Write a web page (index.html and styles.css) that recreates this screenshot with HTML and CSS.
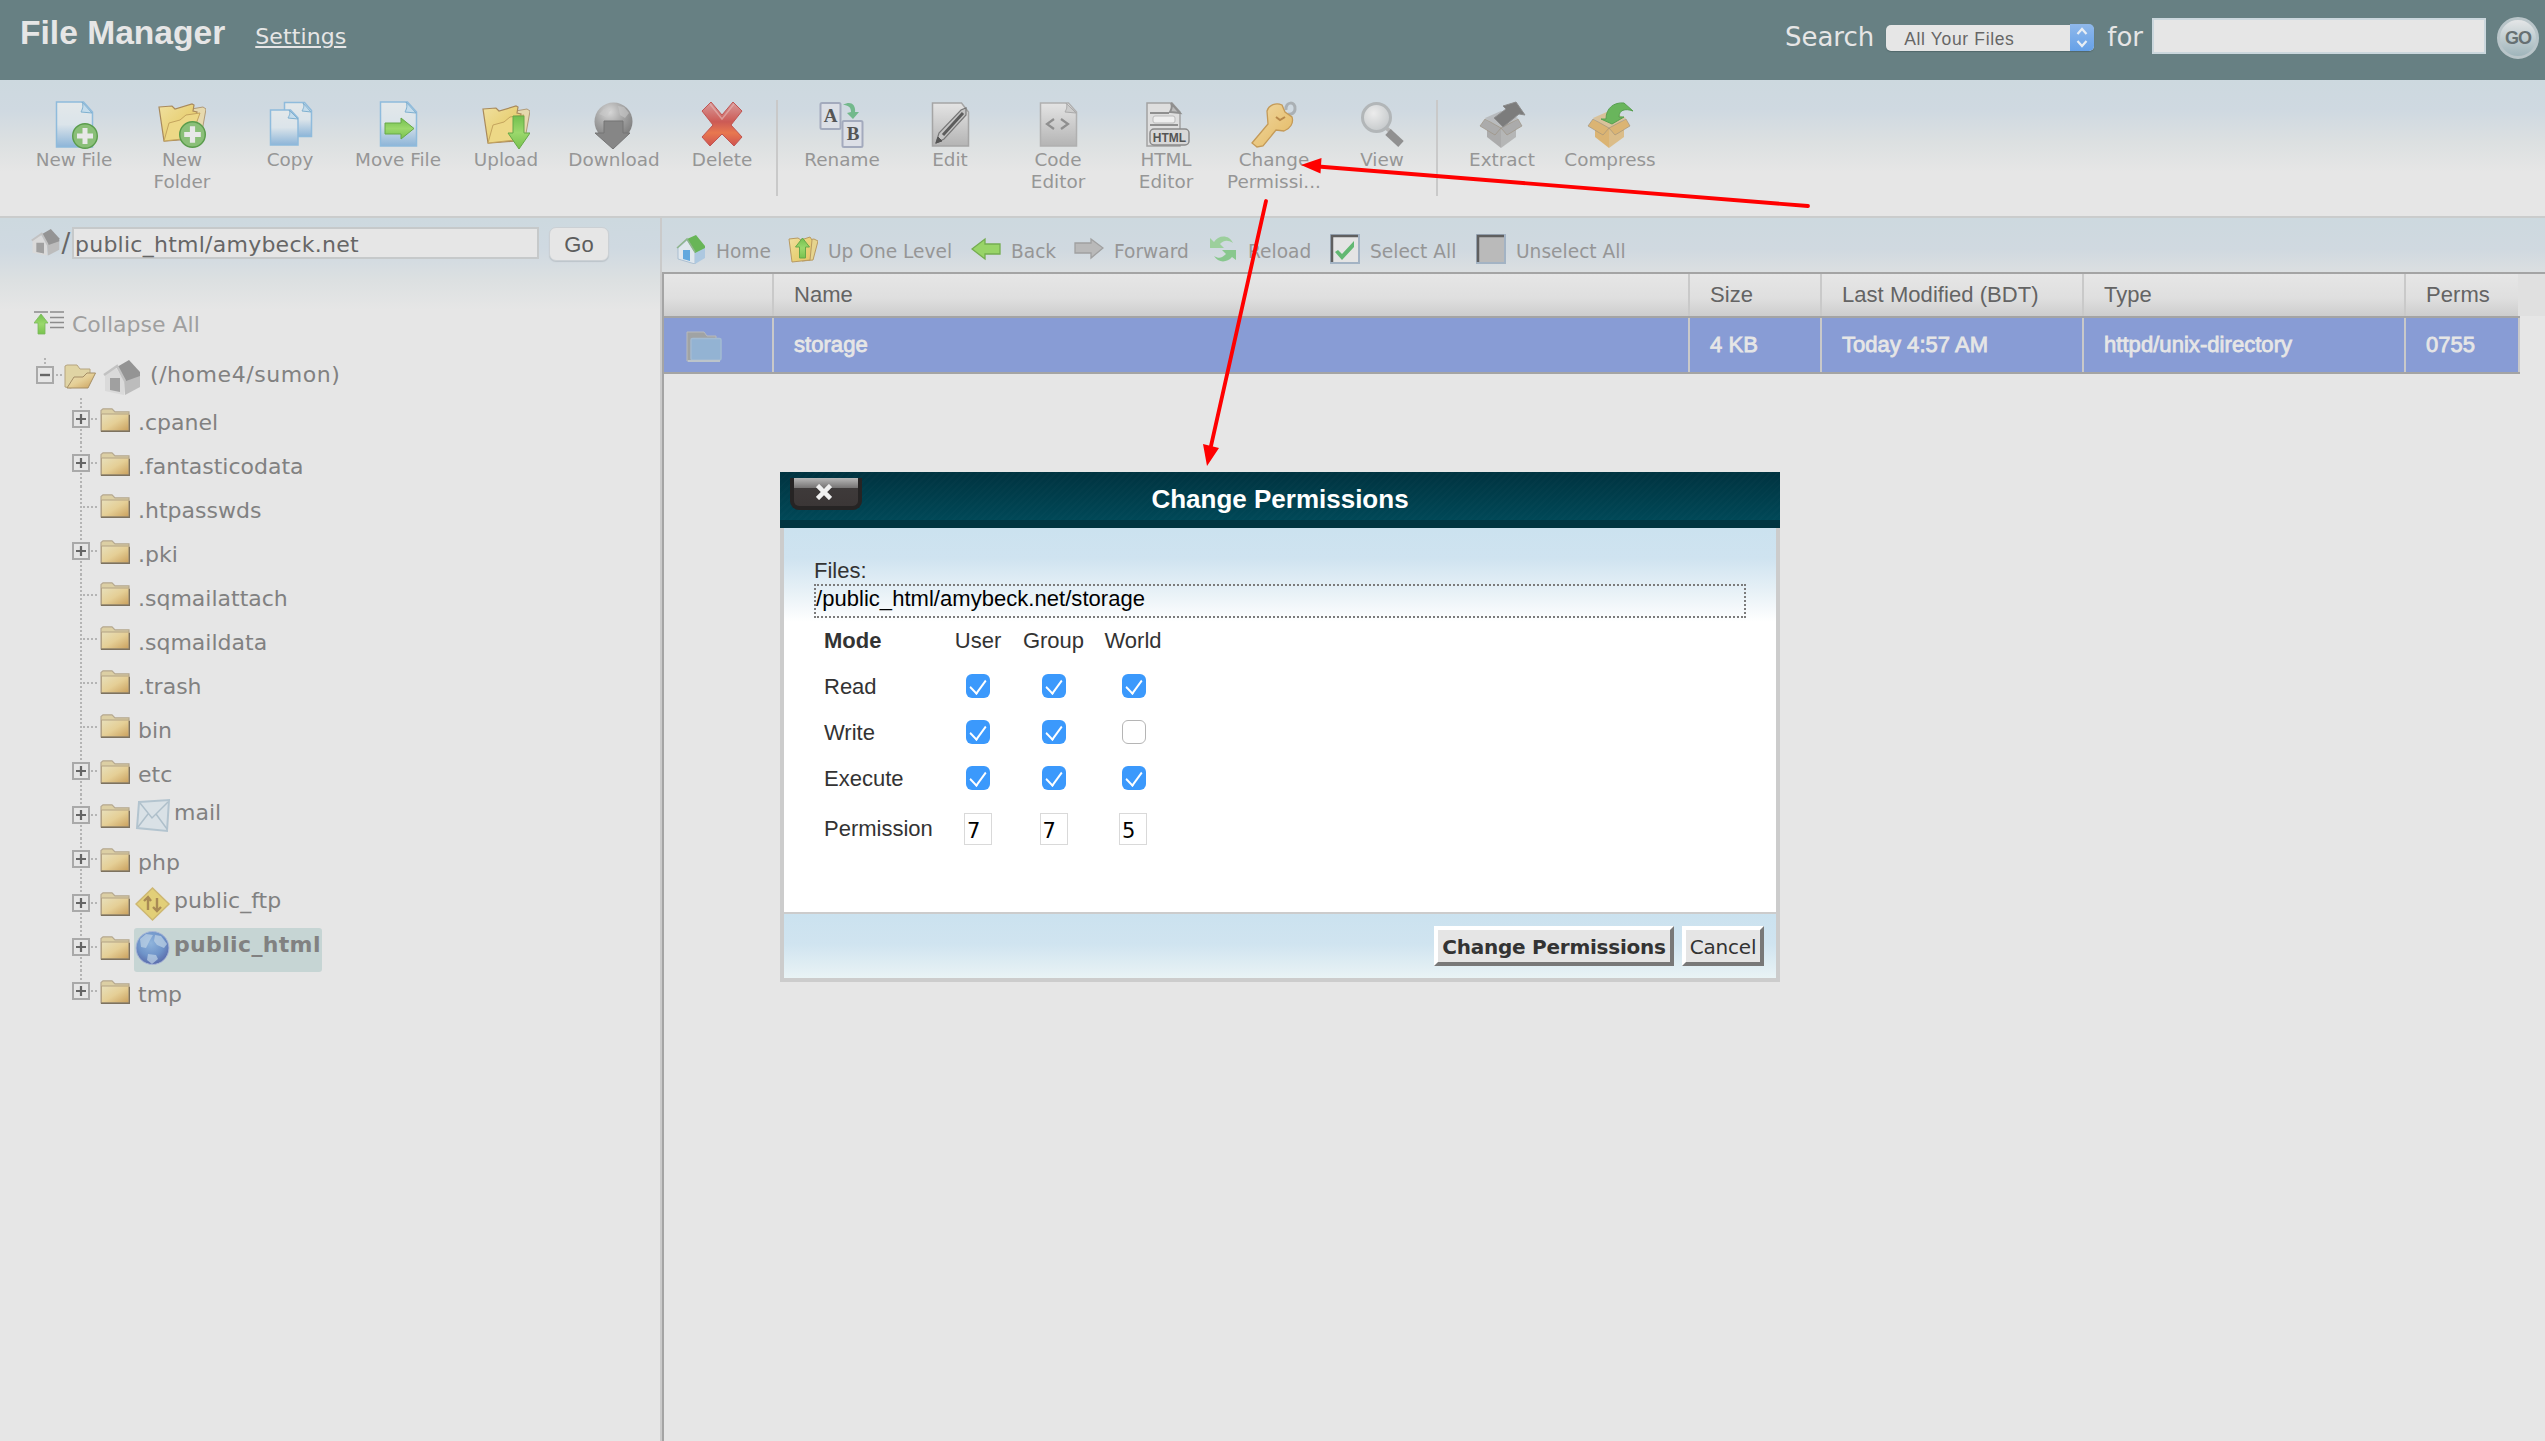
FILE: index.html
```html
<!DOCTYPE html>
<html lang="en">
<head>
<meta charset="utf-8">
<title>File Manager</title>
<link rel="stylesheet" href="styles.css">
</head>
<body>
<svg class="defs" width="0" height="0" aria-hidden="true">
  <defs>
    <linearGradient id="gPage" x1="0" y1="0" x2="0" y2="1"><stop offset="0" stop-color="#e3e8ea"/><stop offset=".5" stop-color="#dbe4ea"/><stop offset="1" stop-color="#8db5d8"/></linearGradient>
    <linearGradient id="gGreyPage" x1="0" y1="0" x2="0" y2="1"><stop offset="0" stop-color="#e4e4e4"/><stop offset="1" stop-color="#b4b4b4"/></linearGradient>
    <linearGradient id="gFolder" x1="0" y1="0" x2="1" y2="1"><stop offset="0" stop-color="#e8e0bb"/><stop offset=".5" stop-color="#e5cf96"/><stop offset="1" stop-color="#c99f5c"/></linearGradient>
    <linearGradient id="gYellow" x1="0" y1="0" x2="1" y2="1"><stop offset="0" stop-color="#f0e0a0"/><stop offset=".5" stop-color="#e9d27a"/><stop offset="1" stop-color="#e6c566"/></linearGradient>
    <linearGradient id="gGreen" x1="0" y1="0" x2="0" y2="1"><stop offset="0" stop-color="#72c04e"/><stop offset=".5" stop-color="#9bd86c"/><stop offset="1" stop-color="#78c24e"/></linearGradient>
    <linearGradient id="gRed" x1="0" y1="0" x2="0" y2="1"><stop offset="0" stop-color="#d99a9a"/><stop offset=".45" stop-color="#cc5a55"/><stop offset=".7" stop-color="#e8784f"/><stop offset="1" stop-color="#cf5350"/></linearGradient>
    <linearGradient id="gKey" x1="0" y1="0" x2="1" y2="1"><stop offset="0" stop-color="#f0d9a4"/><stop offset="1" stop-color="#e4b860"/></linearGradient>
    <radialGradient id="gBall" cx=".4" cy=".25" r=".8"><stop offset="0" stop-color="#d8d8d8"/><stop offset=".5" stop-color="#a2a2a2"/><stop offset="1" stop-color="#777"/></radialGradient>
    <radialGradient id="gGlobe" cx=".45" cy=".35" r=".65"><stop offset="0" stop-color="#8fb4dc"/><stop offset=".6" stop-color="#6f94c9"/><stop offset="1" stop-color="#5a6cab"/></radialGradient>
    <radialGradient id="gLens" cx=".4" cy=".35" r=".7"><stop offset="0" stop-color="#ececec"/><stop offset="1" stop-color="#c4c8ca"/></radialGradient>
    <symbol id="folder" viewBox="0 0 30 24">
      <path d="M1 23V2.500L3 .8h9l3 3h14V23z" fill="#dccfa4" stroke="#b5a890" stroke-width="1.200"/>
      <path d="M1.500 6H29v17H1.500z" fill="url(#gFolder)" stroke="#b3a284"/>
      <path d="M1 23.200h28.500V7" fill="none" stroke="#7d725f" stroke-width="1.500"/>
    </symbol>
    <symbol id="plus" viewBox="0 0 28 44">
      <path d="M9 0v11M9 31v13M19 21h8" stroke="#b4b4b4" stroke-width="2" stroke-dasharray="2 2" fill="none"/>
      <rect x="1" y="13" width="16" height="16" fill="#e6e6e6" stroke="#a9a9a9" stroke-width="2"/>
      <path d="M4 21h10M9 16v10" stroke="#666" stroke-width="2.200"/>
    </symbol>
    <symbol id="lastplus" viewBox="0 0 28 44">
      <path d="M9 0v11M19 21h8" stroke="#b4b4b4" stroke-width="2" stroke-dasharray="2 2" fill="none"/>
      <rect x="1" y="13" width="16" height="16" fill="#e6e6e6" stroke="#a9a9a9" stroke-width="2"/>
      <path d="M4 21h10M9 16v10" stroke="#666" stroke-width="2.200"/>
    </symbol>
    <symbol id="leaf" viewBox="0 0 28 44">
      <path d="M9 0v44M11 21h16" stroke="#b4b4b4" stroke-width="2" stroke-dasharray="2 2" fill="none"/>
    </symbol>
    <symbol id="bigfolder" viewBox="0 0 48 48">
      <path d="M22 10l23-4 3 2-5 28-28 3z" fill="#e6d9ae" stroke="#b09a78"/>
      <path d="M1 6l13-1 3 3 17-5 2 1-1 6 4 1-5 27L6 40z" fill="url(#gYellow)" stroke="#a98a5c" stroke-width="1.200"/>
      <path d="M6 40l5-18 11-3 6-5 14-2-9 25z" fill="#edd886" stroke="#c4a45e" stroke-width="1"/>
    </symbol>
    <symbol id="addbadge" viewBox="0 0 26 26">
      <circle cx="13" cy="13" r="12.300" fill="#8abf78" stroke="#5a9c4c" stroke-width="1.400"/>
      <path d="M13 5v16M5 13h16" stroke="#e8e8e8" stroke-width="5"/>
    </symbol>
    <symbol id="house" viewBox="0 0 38 36">
      <path d="M2 16v16l19 4V22L13 9z" fill="#dadada"/>
      <path d="M21 20l16-5v13L22 36z" fill="#bcbcbc"/>
      <path d="M14 8L26 1l11 12v4l-14 5z" fill="#949494"/>
      <path d="M1 16L14 7l8 15" fill="none" stroke="#c2c2c2" stroke-width="2.500"/>
      <path d="M7 19h10v14l-10-2z" fill="#a0a0a0"/>
    </symbol>
    <symbol id="openbox" viewBox="0 0 48 48">
      <path d="M9 26l14 1v20L9 36z"/><path d="M38 24l-15 3v20l15-11z" fill-opacity=".8"/>
      <path d="M7 17l16-7 17 7-17 12z" fill-opacity=".65"/>
      <path d="M7 18l16 9-6 7L2 25z" stroke="#9a8f7c" stroke-width=".6"/>
      <path d="M40 18l-17 9 6 7 15-9z" stroke="#9a8f7c" stroke-width=".6"/>
    </symbol>
  </defs>
</svg>

<header class="topbar">
  <h1 class="title">File Manager</h1>
  <a class="settings">Settings</a>
  <div class="search">
    <span>Search</span>
    <span class="select"><span class="select-text">All Your Files</span>
      <svg class="stepper" viewBox="0 0 24 27"><path d="M7.500 10l4.500-5 4.500 5M7.500 17l4.500 5 4.500-5" fill="none" stroke="#e8eef4" stroke-width="2.200"/></svg>
    </span>
    <span class="for">for</span>
    <span class="query"></span>
    <span class="gobadge">GO</span>
  </div>
</header>

<nav class="toolbar">
  <div class="tool"><svg viewBox="0 0 48 48"><path d="M6.500 1h27l9 10v35h-36z" fill="url(#gPage)" stroke="#8fbbdc" stroke-width="1.500"/><path d="M32 1c2 4 0 8-1 10l11 1z" fill="#c4dcec" stroke="#7fb0d0"/><use href="#addbadge" x="22" y="22" width="26" height="26"/></svg><span>New File</span></div>
  <div class="tool"><svg viewBox="0 0 48 48"><use href="#bigfolder" width="48" height="48"/><use href="#addbadge" x="21" y="20" width="27" height="27"/></svg><span>New<br>Folder</span></div>
  <div class="tool"><svg viewBox="0 0 48 48"><path d="M18.500 1.500h20l7 8v26h-27z" fill="url(#gPage)" stroke="#8fbbdc" stroke-width="1.500"/><path d="M37 2c2 3 0 6-1 8l9 1z" fill="#c4dcec" stroke="#7fb0d0"/><path d="M4.500 9h20l7.500 8v27H4.500z" fill="url(#gPage)" stroke="#8fbbdc" stroke-width="1.500"/><path d="M23 9c2 3 0 6-1 8l10 1z" fill="#c4dcec" stroke="#7fb0d0"/></svg><span>Copy</span></div>
  <div class="tool"><svg viewBox="0 0 48 48"><path d="M6.500 1h27l9 10v34h-36z" fill="url(#gPage)" stroke="#8fbbdc" stroke-width="1.500"/><path d="M32 1c2 4 0 8-1 10l11 1z" fill="#c4dcec" stroke="#7fb0d0"/><path d="M11 22h16v-5l13 10.500L27 38v-5H11z" fill="url(#gGreen)" stroke="#66a848"/></svg><span>Move File</span></div>
  <div class="tool"><svg viewBox="0 0 48 48"><g transform="translate(0 2)"><use href="#bigfolder" width="48" height="48"/></g><path d="M31 15h11v17h6L37 48 26 32h5z" fill="url(#gGreen)" stroke="#66a848"/></svg><span>Upload</span></div>
  <div class="tool"><svg viewBox="0 0 48 48"><circle cx="23.500" cy="20.500" r="19" fill="url(#gBall)"/><path d="M28 5l6 1 5 6-4 5-5-3zM9 13l5-5 7 1-5 7z" fill="#c8c8c8" opacity=".6"/><path d="M14 20h19v12h7L23 48 5 32h9z" fill="#868686" stroke="#757575"/></svg><span>Download</span></div>
  <div class="tool"><svg viewBox="0 0 48 48"><path d="M4 10l9-9 11 13L35 1l9 9-11 14 11 12-8 9-12-12-12 12-8-9 11-12z" fill="url(#gRed)" stroke="#c05552"/><path d="M12 3l12 15L36 3" fill="none" stroke="#e3b0ae" stroke-width="1.500" opacity=".7"/></svg><span>Delete</span></div>
  <i class="divider"></i>
  <div class="tool"><svg viewBox="0 0 48 48"><rect x="2.500" y="2" width="20" height="26" rx="1.500" fill="#dcdfe6" stroke="#a3aabd" stroke-width="2"/><rect x="24.500" y="20" width="20" height="26" rx="1.500" fill="#dcdfe6" stroke="#a3aabd" stroke-width="2"/><text x="12.500" y="21" class="glyph serif">A</text><text x="35" y="39" class="glyph serif">B</text><path d="M25 4c8-5 13 0 12 7h4l-6 7-6-6 4-1c0-5-3-7-8-7z" fill="#73b98c"/></svg><span>Rename</span></div>
  <div class="tool"><svg viewBox="0 0 48 48"><path d="M6.500 2h29l7 9v34h-36z" fill="url(#gGreyPage)" stroke="#a5a5a5" stroke-width="1.500"/><path d="M10 42l3-10L35 9l5-2v7L18 38z" fill="#c4c4c4" stroke="#777" stroke-width="1.200"/><path d="M17 34L37 12" stroke="#5c5c5c" stroke-width="3"/><path d="M10 42l2-6 4 4z" fill="#555" stroke="#555"/></svg><span>Edit</span></div>
  <div class="tool"><svg viewBox="0 0 48 48"><path d="M6.500 2h28l8 9v34h-36z" fill="url(#gGreyPage)" stroke="#b0b0b0" stroke-width="1.500"/><path d="M32 2c2 4 0 7-1 9l11 1z" fill="#ccc" stroke="#aaa"/><path d="M20 18l-7 5 7 5M27 18l7 5-7 5" fill="none" stroke="#8f8f8f" stroke-width="2.200"/></svg><span>Code<br>Editor</span></div>
  <div class="tool"><svg viewBox="0 0 48 48"><path d="M5 2h25l8 9v34H5z" fill="#dedede" stroke="#a3a3a3" stroke-width="1.500"/><path d="M29 2c2 4 0 7-1 9l10 1zM8 12h19M8 24h28" fill="#bbb" stroke="#8f8f8f" stroke-width="2"/><rect x="11" y="15" width="22" height="7" rx="2" fill="#eee" stroke="#bbb"/><rect x="8" y="28" width="39" height="16" rx="4" fill="#d8d8d8" stroke="#8a8a8a" stroke-width="1.500"/><text x="27.500" y="40.500" class="glyph tag">HTML</text></svg><span>HTML<br>Editor</span></div>
  <div class="tool"><svg viewBox="0 0 48 48"><path d="M36 9c-1-9 10-9 9-1 0 4-4 6-7 5" fill="none" stroke="#aab0b4" stroke-width="3"/><path d="M17 10c2-6 9-9 15-6l3 7 7 5c2 6-2 12-8 14l-8-1-13 16-6 1-5-4 16-19z" fill="url(#gKey)" stroke="#c49a58" stroke-width="1.300"/><path d="M26 16l4 3 5-3" fill="none" stroke="#b8884a" stroke-width="2"/></svg><span>Change<br>Permissi...</span></div>
  <div class="tool"><svg viewBox="0 0 48 48"><path d="M27 26l6 5" stroke="#b5b5b5" stroke-width="4"/><path d="M30 31l13 12" stroke="#909090" stroke-width="8"/><circle cx="18.500" cy="16.500" r="14" fill="url(#gLens)" stroke="#b2b6b8" stroke-width="3"/></svg><span>View</span></div>
  <i class="divider"></i>
  <div class="tool"><svg viewBox="0 0 48 48"><use href="#openbox" width="48" height="48" fill="#ababab"/><path d="M16 17l12-9-3-3 13-4 9 13-6-1-16 13z" fill="#7c7c7c" stroke="#8d8d8d"/></svg><span>Extract</span></div>
  <div class="tool"><svg viewBox="0 0 48 48"><use href="#openbox" width="48" height="48" fill="#dbb473"/><path d="M15 18h5C20 7 28 1 38 2l9 8c-8-3-14-1-14 6h5L26 23z" fill="#69b55c" stroke="#58a050"/></svg><span>Compress</span></div>
</nav>

<main class="panes">
  <aside class="side">
    <div class="path">
      <svg class="path-home" viewBox="0 0 38 36"><use href="#house"/></svg><span class="slash">/</span>
      <span class="path-input">public_html/amybeck.net</span>
      <span class="path-go">Go</span>
    </div>
    <div class="collapse"><svg viewBox="0 0 30 24"><path d="M0 1h14M16 1h14M16 6.500h14M16 11.500h14M16 16.500h14" stroke="#8c8c8c" stroke-width="1.600"/><path d="M7 3l7 9h-3v11H4V12H0z" fill="url(#gGreen)" stroke="#78b85c" stroke-width=".8"/></svg><span>Collapse All</span></div>
    <div class="root">
      <svg class="root-toggle" viewBox="0 0 28 28"><path d="M9 0v7M20 17h8" stroke="#b4b4b4" stroke-width="2" stroke-dasharray="2 2"/><rect x="1" y="9" width="16" height="16" fill="none" stroke="#a9a9a9" stroke-width="2"/><path d="M4 17h10" stroke="#666" stroke-width="2.400"/></svg>
      <svg class="root-folder" viewBox="0 0 32 25"><path d="M1 23V2l2-1h10l3 4h10v6L7 24z" fill="#e0d4a4" stroke="#b5a480"/><path d="M3 24L10 13h9l4-4h8.500L24 24z" fill="url(#gFolder)" stroke="#a58e66"/></svg>
      <svg class="root-home" viewBox="0 0 38 36"><use href="#house"/></svg>
      <span>(/home4/sumon)</span>
    </div>
    <ul class="tree">
      <li><svg class="tg"><use href="#plus"/></svg><svg class="fd"><use href="#folder"/></svg><span class="lb">.cpanel</span></li>
      <li><svg class="tg"><use href="#plus"/></svg><svg class="fd"><use href="#folder"/></svg><span class="lb">.fantasticodata</span></li>
      <li class="leaf"><svg class="tg"><use href="#leaf"/></svg><svg class="fd"><use href="#folder"/></svg><span class="lb">.htpasswds</span></li>
      <li><svg class="tg"><use href="#plus"/></svg><svg class="fd"><use href="#folder"/></svg><span class="lb">.pki</span></li>
      <li class="leaf"><svg class="tg"><use href="#leaf"/></svg><svg class="fd"><use href="#folder"/></svg><span class="lb">.sqmailattach</span></li>
      <li class="leaf"><svg class="tg"><use href="#leaf"/></svg><svg class="fd"><use href="#folder"/></svg><span class="lb">.sqmaildata</span></li>
      <li class="leaf"><svg class="tg"><use href="#leaf"/></svg><svg class="fd"><use href="#folder"/></svg><span class="lb">.trash</span></li>
      <li class="leaf"><svg class="tg"><use href="#leaf"/></svg><svg class="fd"><use href="#folder"/></svg><span class="lb">bin</span></li>
      <li><svg class="tg"><use href="#plus"/></svg><svg class="fd"><use href="#folder"/></svg><span class="lb">etc</span></li>
      <li><svg class="tg"><use href="#plus"/></svg><svg class="fd"><use href="#folder"/></svg><span class="special"><svg viewBox="0 0 36 36"><path d="M4 4l30-2-2 31-30-3z" fill="#d9e1e6" stroke="#b3c4cf" stroke-width="2"/><path d="M5 5l12 15L33 4M3 29l10-13M32 31L21 16" fill="none" stroke="#aebfca" stroke-width="1.500"/></svg>mail</span></li>
      <li><svg class="tg"><use href="#plus"/></svg><svg class="fd"><use href="#folder"/></svg><span class="lb">php</span></li>
      <li><svg class="tg"><use href="#plus"/></svg><svg class="fd"><use href="#folder"/></svg><span class="special"><svg viewBox="0 0 36 36"><path d="M17.500 2L34 18 17.500 34 1 18z" fill="#e2cf78" stroke="#cdb772" stroke-width="1.500"/><path d="M13 24V12M9 15l4-4 3 4M22 12v12M18 21l4 4 4-4" fill="none" stroke="#a98a55" stroke-width="2.400"/></svg>public_ftp</span></li>
      <li><svg class="tg"><use href="#plus"/></svg><svg class="fd"><use href="#folder"/></svg><span class="special selected"><svg viewBox="0 0 36 36"><circle cx="17.500" cy="18" r="16.500" fill="url(#gGlobe)" stroke="#aab8d8"/><path d="M5 9l6-5 7 1-3 5-4 8-5-1zM20 5l6 1 6 8-3 4-7-3-3-4zM13 24l8 1 2 4-6 5-5-4z" fill="#bfd3e6" opacity=".7"/></svg>public_html</span></li>
      <li><svg class="tg"><use href="#lastplus"/></svg><svg class="fd"><use href="#folder"/></svg><span class="lb">tmp</span></li>
    </ul>
  </aside>

  <section class="files">
    <div class="actions">
      <span class="act"><svg viewBox="0 0 30 30"><path d="M2 14L11 6l8 12v12L2 25z" fill="#e0e7ed" stroke="#9fb6cc" stroke-width=".8"/><path d="M19 17l10-4v11l-10 6z" fill="#adc8e0"/><path d="M11 5L20 1l9 11v2l-10 5z" fill="#68b557"/><path d="M1 14l10-9 8 13" fill="none" stroke="#8fb58c" stroke-width="1.500"/><path d="M7 16h7v11l-7-2z" fill="#62a8de"/></svg>Home</span>
      <span class="act"><svg viewBox="0 0 30 30"><path d="M14 7l12-2 4 2-5 19-11 1z" fill="#e6d48e" stroke="#b89a62"/><path d="M1 5l9-1 3 2 9-3 2 3-2 20-18 2z" fill="url(#gYellow)" stroke="#b89a62"/><path d="M14.500 4l7 9h-4v11h-6V13h-4z" fill="url(#gGreen)" stroke="#66a848"/></svg>Up One Level</span>
      <span class="act"><svg viewBox="0 0 30 30"><path d="M1 15L14 5v5h15v10H14v5z" fill="#98d468" stroke="#74ad50" stroke-width="1.300"/></svg>Back</span>
      <span class="act"><svg viewBox="0 0 30 30"><path d="M29 14L17 5v4H1v10h16v5z" fill="#b9b9b9" stroke="#a0a0a0" stroke-width="1.300"/></svg>Forward</span>
      <span class="act"><svg viewBox="0 0 30 30"><path d="M2 4l4 4c4-7 15-8 19 1-5-3-9-3-13 1l4 4H2z" fill="#9ccf9c"/><path d="M28 26l-4-3c-5 6-14 6-18-1 5 3 8 2 12-2l-4-4h14z" fill="#88c78e"/></svg>Reload</span>
      <span class="act"><svg viewBox="0 0 30 30"><rect width="30" height="30" fill="#a3b3c4"/><path d="M2 2h26v26H2z" fill="#e4e4e4"/><path d="M2 28V2h26" fill="none" stroke="#5f5f5f" stroke-width="2.500"/><path d="M5 18l3-2 4 4L24 7v6L12 26z" fill="#62b872"/></svg>Select All</span>
      <span class="act"><svg viewBox="0 0 30 30"><rect width="30" height="30" fill="#a3b3c4"/><path d="M2 2h26v26H2z" fill="#bababa"/><path d="M2 28V2h26" fill="none" stroke="#5f5f5f" stroke-width="2.500"/></svg>Unselect All</span>
    </div>
    <div class="grid">
      <div class="row head"><span></span><span>Name</span><span>Size</span><span>Last Modified (BDT)</span><span>Type</span><span>Perms</span></div>
      <div class="row entry"><span><svg viewBox="0 0 36 32"><path d="M1 31V2h17l3 4h9v4H6v21z" fill="#a0a3a4" stroke="#b8babb"/><rect x="5" y="8.500" width="30" height="21.500" rx="1.500" fill="#93b3d3" stroke="#a3bbd2" stroke-width="1.500"/><path d="M2 31h32" stroke="#bcc4ca" stroke-width="2"/></svg></span><span>storage</span><span>4 KB</span><span>Today 4:57 AM</span><span>httpd/unix-directory</span><span>0755</span></div>
    </div>
  </section>
</main>

<div class="dialog" role="dialog">
  <div class="dialog-head"><span class="close"><svg viewBox="0 0 16 16"><path d="M1.500 1.500l13 13M14.500 1.500l-13 13" stroke="#f0f0f0" stroke-width="4.500"/></svg></span><h2>Change Permissions</h2></div>
  <div class="dialog-body">
    <div class="files-label">Files:</div>
    <div class="files-list">/public_html/amybeck.net/storage</div>
    <div class="modes">
      <b>Mode</b><span class="c">User</span><span class="c">Group</span><span class="c">World</span>
      <span class="mode">Read</span><i class="cb on"></i><i class="cb on"></i><i class="cb on"></i>
      <span class="mode">Write</span><i class="cb on"></i><i class="cb on"></i><i class="cb"></i>
      <span class="mode">Execute</span><i class="cb on"></i><i class="cb on"></i><i class="cb on"></i>
      <span>Permission</span><span class="num">7</span><span class="num">7</span><span class="num">5</span>
    </div>
  </div>
  <div class="dialog-foot"><span class="btn primary">Change Permissions</span><span class="btn cancel">Cancel</span></div>
</div>

<svg class="arrows" viewBox="0 0 2545 1441">
  <path d="M1808 206L1318 166.500M1266 201L1211 446" stroke="#f00" stroke-width="3.800" stroke-linecap="round"/>
  <path d="M1301 165l20.500-7-1 15.500zM1207 466l-4-22 16 4z" fill="#f00"/>
</svg>
</body>
</html>
```
FILE: styles.css
```css
* { box-sizing: border-box; }
html, body { margin: 0; height: 100%; overflow: hidden; }
body {
  display: flex;
  flex-direction: column;
  background: #e6e6e6;
  font-family: "DejaVu Sans", Verdana, sans-serif;
  font-size: 22px;
  color: #818181;
}
svg { display: block; flex: none; }
.defs { position: absolute; }

/* Top bar */
.topbar {
  display: flex;
  align-items: flex-start;
  height: 80px;
  flex: none;
  padding: 0 6px 0 20px;
  background: #678083;
  color: #e6e6e6;
}
.title { margin: 0; font: bold 33.6px/66px "Liberation Sans", Arial, sans-serif; }
.settings { margin-left: 30px; letter-spacing: .1px; line-height: 73px; text-decoration: underline; text-decoration-thickness: 2px; text-underline-offset: 2px; }
.search { display: flex; align-items: flex-start; margin-left: auto; font-size: 26px; line-height: 74px; }
.select {
  display: flex;
  justify-content: space-between;
  width: 208px;
  height: 26px;
  margin: 25px 0 0 12px;
  padding-left: 18px;
  border-radius: 5px;
  background: #e6e6e6;
  box-shadow: 0 1px 1px #51686b;
  color: #666;
  font: 17.5px/29px "Liberation Sans", Arial, sans-serif;
  letter-spacing: .65px;
}
.stepper { width: 24px; height: 27px; margin-top: -1px; border-radius: 0 5px 5px 0; background: linear-gradient(#8fb8ea, #66a1e8); }
.for { margin-left: 13px; }
.query { width: 334px; height: 36px; margin: 18px 0 0 9px; border: 2px solid #cbd7dd; background: #e6e6e6; }
.gobadge {
  width: 42px;
  height: 42px;
  margin: 17px 0 0 11px;
  border: 3px solid #b9c5c9;
  border-radius: 50%;
  background: linear-gradient(#e4e6e7, #9fb5bb);
  color: #667072;
  font: bold 18px/37px "Liberation Sans", Arial, sans-serif;
  letter-spacing: -1px;
  text-align: center;
}

/* Toolbar */
.toolbar {
  display: flex;
  height: 138px;
  flex: none;
  padding: 21px 0 0 20px;
  border-bottom: 2px solid #cacccc;
  background: linear-gradient(#cdd9df, #cfd9e1 30px, #dce0e1 62px, #e6e6e6 92px);
}
.tool { display: flex; flex-direction: column; align-items: center; width: 108px; color: #969696; font-size: 18.4px; line-height: 22px; text-align: center; white-space: nowrap; }
.tool svg { width: 48px; height: 48px; }
.divider { width: 2px; height: 96px; margin: -1px 10px 0 0; background: #c9c9c9; }
.glyph { fill: #555; text-anchor: middle; }
.serif { font: bold 19px "Liberation Serif", serif; }
.tag { font: bold 12px "Liberation Sans", sans-serif; }

/* Panes */
.panes { display: flex; flex: 1; min-height: 0; }
.side { width: 662px; flex: none; border-right: 2px solid #cacaca; background: linear-gradient(#cdd9df, #cfd9e1 30px, #dce0e1 62px, #e6e6e6 92px); }
.path { display: flex; height: 43px; padding: 9px 0 0 31px; line-height: 34px; color: #666; }
.path-home { width: 29px; height: 28px; margin-top: 1px; }
.slash { width: 12px; text-align: center; font-size: 26px; line-height: 32px; }
.path-input { width: 467px; height: 32px; padding-left: 1px; border: 2px solid #c6c9ca; background: #e6e6e6; letter-spacing: .25px; line-height: 31px; }
.path-go { width: 60px; height: 34px; margin-left: 10px; border: 1px solid #cbd0d4; border-radius: 7px; background: #e6e6e6; box-shadow: 0 1px 1px #bcc4ca; color: #5d5d5d; font: 22px/34px "Liberation Sans", Arial, sans-serif; text-align: center; }
.collapse { display: flex; height: 30px; margin-top: 48px; padding-left: 34px; color: #9f9f9f; line-height: 32px; }
.collapse svg { width: 30px; height: 24px; margin: 2px 8px 0 0; }
.root { display: flex; margin-top: 19px; height: 40px; padding-left: 36px; letter-spacing: .55px; line-height: 34px; }
.root-toggle { width: 28px; height: 28px; }
.root-folder { width: 32px; height: 25px; margin-top: 6px; }
.root-home { width: 38px; height: 36px; margin: 1px 9px 0 7px; }
.tree { margin: 0; padding: 0 0 0 72px; list-style: none; }
.tree li { display: flex; height: 44px; }
.tg { width: 28px; height: 44px; }
.fd { width: 30px; height: 24px; margin-top: 10px; }
.leaf .fd { margin-top: 8px; }
.lb { margin: 2px 0 0 8px; line-height: 45px; }
.special { display: flex; height: 44px; margin: 2px 0 0 4px; padding-right: 1px; border-radius: 3px; line-height: 34px; }
.special svg { width: 36px; height: 36px; margin: 2px 3px 0 1px; }
.selected { width: 188px; background: #c6d5d4; font-weight: bold; letter-spacing: .35px; }

/* File list */
.files { flex: 1; }
.actions { display: grid; grid-template-columns: 112px 183px 103px 134px 122px 146px 200px; height: 54px; padding: 16px 0 0 14px; background: linear-gradient(#cdd9df, #d0d9e0 32px, #dbdfe1); }
.act { display: flex; gap: 10px; height: 30px; color: #969696; font-size: 18.6px; line-height: 36px; white-space: nowrap; }
.act svg { width: 30px; height: 30px; }
.grid { height: 100%; border: solid #a4a4a4; border-width: 2px 0 0 2px; font: 22px "Liberation Sans", Arial, sans-serif; }
.row { display: grid; grid-template-columns: 110px 916px 132px 262px 322px 114px; letter-spacing: .05px; }
.row span { padding-left: 20px; border-right: 2px solid #c9c9c9; }
.head { height: 42px; background: linear-gradient(90deg, transparent 1854px, #e0e0e0 1854px), linear-gradient(#e6e6e6, #dfdfdf 24px, #cdcdcd); line-height: 41px; color: #646464; }
.row.head span:last-child { border: 0; }
.entry { width: 1856px; height: 58px; border: solid #a4a4a4; border-width: 2px 0; background: #889cd5; line-height: 53px; color: #e6e6e6; -webkit-text-stroke: .8px #e6e6e6; }
.entry svg { width: 36px; height: 32px; margin: 12px 0 0 2px; }

/* Dialog */
.dialog { position: absolute; left: 780px; top: 472px; width: 1000px; height: 510px; background: #fff; color: #333; font: 22px "Liberation Sans", Arial, sans-serif; }
.dialog-head {
  display: grid;
  grid-template-columns: 1fr auto 1fr;
  height: 56px;
  padding: 0 10px;
  border-bottom: 8px solid #003440;
  background: repeating-linear-gradient(135deg, rgba(255,255,255,.01) 0 2px, transparent 2px 5px), linear-gradient(#003340, #004857);
}
.dialog-head h2 { margin: 0; color: #fff; font-size: 26px; line-height: 54px; }
.close { display: flex; justify-content: center; width: 72px; height: 32px; margin-top: 6px; padding-top: 6px; border: solid #262424; border-width: 0 4px 4px; border-radius: 0 0 9px 9px; background: linear-gradient(#b8b8b8, #757373 10px, #3e3a3a 10px, #3b3636); }
.close svg { width: 16px; height: 16px; margin-right: 4px; }
.dialog-body { height: 384px; padding: 30px 30px 0; border: solid #ccc; border-width: 0 4px; background: linear-gradient(#cbe2ef, #cfe3f0 30px, #e9f2f7 66px, #fff 94px); }
.files-label { height: 26px; line-height: 26px; }
.files-list { height: 34px; border: 2px dotted #7b7b7b; color: #000; letter-spacing: .04px; line-height: 25px; }
.modes { display: grid; grid-template-columns: 116px 76px 75px 84px; grid-template-rows: 45px 46px 46px 46px 56px; align-items: center; padding-left: 10px; }
.modes .c { text-align: center; }
.mode { padding-top: 1px; }
.cb { display: block; justify-self: center; width: 24px; height: 24px; border: 1.5px solid #b5b5b5; border-radius: 6px; background: #fff; }
.cb:nth-child(4n) { margin-left: 2px; }
.cb.on { display: grid; place-items: center; border: 0; background: #3b99fc; }
.cb.on::after { content: ""; width: 8px; height: 15px; margin-top: -3px; border: solid #fff; border-width: 0 2.6px 2.6px 0; transform: rotate(36deg) skewY(10deg); }
.num { justify-self: center; width: 28px; height: 32px; padding-left: 2px; border: 1px solid #d9d9d9; color: #000; font: 21px/34px "DejaVu Sans", Verdana, sans-serif; }
.dialog-foot { display: flex; justify-content: flex-end; gap: 8px; height: 70px; padding: 12px 8px 0; border: solid #ccc; border-width: 2px 4px 4px; background: linear-gradient(#cbe2ef, #d0e4f0 30px, #e9f3f5); }
.dialog-foot { padding-right: 12px; }
.btn { height: 40px; border: 4px solid; border-color: #fff #787878 #787878 #fff; background: #e5e5e5; font: 20px/34px "DejaVu Sans", Verdana, sans-serif; text-align: center; white-space: nowrap; }
.primary { width: 240px; font-weight: bold; letter-spacing: -.25px; }
.cancel { width: 82px; letter-spacing: -.2px; }

/* Pointer annotations drawn over the page */
.arrows { position: absolute; left: 0; top: 0; width: 2545px; height: 1441px; pointer-events: none; }
```
